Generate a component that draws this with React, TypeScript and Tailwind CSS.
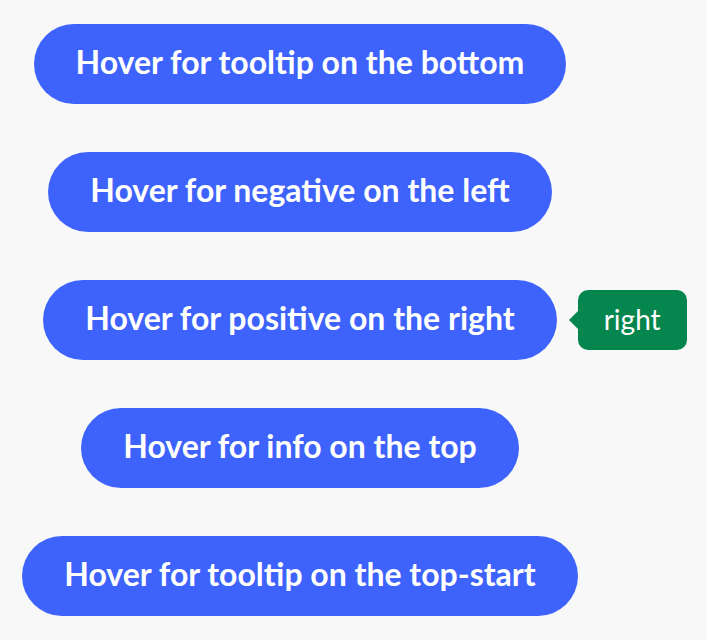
import React from 'react';

const buttons = [
  { label: 'Hover for tooltip on the bottom' },
  { label: 'Hover for negative on the left' },
  { label: 'Hover for positive on the right', tip: 'right' },
  { label: 'Hover for info on the top' },
  { label: 'Hover for tooltip on the top-start' },
];

export default function App() {
  return (
    <div className="min-h-screen bg-[#f8f8f8] font-['Lato',sans-serif]">
      <div className="w-[600px] pt-6 flex flex-col items-center gap-12">
        {buttons.map((b) => (
          <div key={b.label} className="relative">
            <button className="h-20 px-[42px] pb-[5px] rounded-full bg-[#3e63fd] text-white text-[32px] font-bold whitespace-nowrap">
              {b.label}
            </button>
            {b.tip && (
              <div className="absolute left-full top-1/2 -translate-y-1/2 ml-[21px] h-[60px] px-[26px] pb-[3px] flex items-center rounded-[10px] bg-[#05864e] text-white text-[28px]">
                <span className="absolute -left-[9px] top-1/2 -translate-y-1/2 w-0 h-0 border-y-[9px] border-y-transparent border-r-[9px] border-r-[#05864e]" />
                {b.tip}
              </div>
            )}
          </div>
        ))}
      </div>
    </div>
  );
}
